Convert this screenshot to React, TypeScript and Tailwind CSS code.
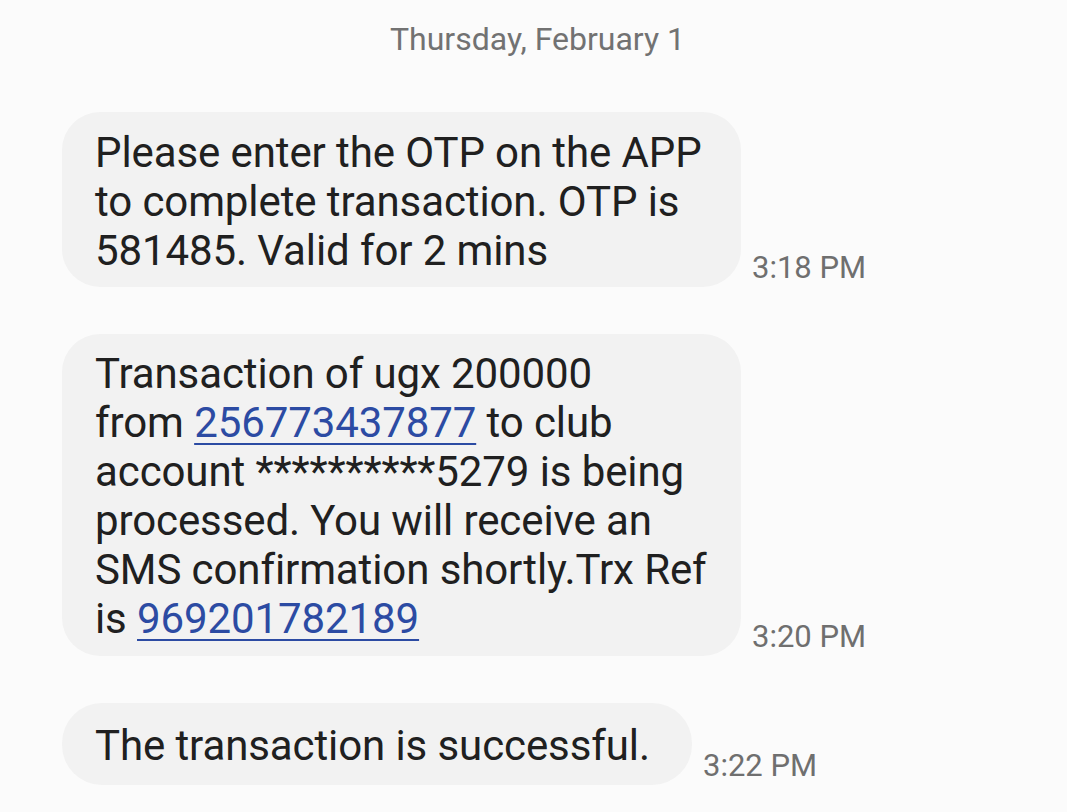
import React from "react";

const Stamp = ({ t }: { t: string }) => (
  <div className="ml-[11px] mb-[1px] text-[31px] leading-[36px] text-[#6f6f6f] whitespace-nowrap">{t}</div>
);

const Link = ({ children }: { children: React.ReactNode }) => (
  <span className="text-[#2c4ba3] underline decoration-[2px] underline-offset-[6px]">{children}</span>
);

export default function App() {
  return (
    <div
      className="w-[1067px] h-[812px] overflow-hidden bg-[#fbfbfb] text-[#202020]"
      style={{ fontFamily: "Roboto, 'Noto Sans', sans-serif" }}
    >
      <div className="pt-[20px] flex justify-center">
        <div className="text-[32px] leading-[38px] text-[#727272] pl-[8px]">Thursday, February 1</div>
      </div>
      <div className="pl-[62px] pt-[54px] flex flex-col gap-[47px]">
        <div className="flex items-end">
          <div className="w-[679px] bg-[#f2f2f2] rounded-[38px] pl-[33px] pr-[20px] pt-[16px] pb-[12px] text-[42px] leading-[49px] tracking-[-0.1px]">
            Please enter the OTP on the APP
            <br />
            to complete transaction. OTP is
            <br />
            581485. Valid for 2 mins
          </div>
          <Stamp t="3:18 PM" />
        </div>
        <div className="flex items-end">
          <div className="w-[679px] bg-[#f2f2f2] rounded-[38px] pl-[33px] pr-[20px] pt-[15px] pb-[13px] text-[42px] leading-[49px] tracking-[-0.1px]">
            Transaction of ugx 200000
            <br />
            from <Link>256773437877</Link> to club
            <br />
            account **********5279 is being
            <br />
            processed. You will receive an
            <br />
            SMS confirmation shortly.Trx Ref
            <br />
            is <Link>969201782189</Link>
          </div>
          <Stamp t="3:20 PM" />
        </div>
        <div className="flex items-end">
          <div className="w-[630px] bg-[#f2f2f2] rounded-[40px] pl-[33px] pr-[20px] pt-[18px] pb-[15px] text-[42px] leading-[49px] tracking-[-0.1px] whitespace-nowrap">
            The transaction is successful.
          </div>
          <Stamp t="3:22 PM" />
        </div>
      </div>
    </div>
  );
}
